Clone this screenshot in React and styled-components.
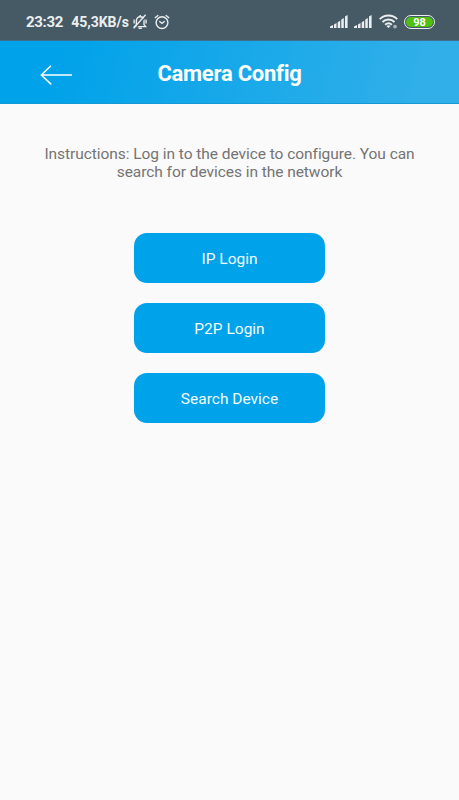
import React from 'react';
import styled, { createGlobalStyle } from 'styled-components';

const GlobalStyle = createGlobalStyle`
  * {
    box-sizing: border-box;
  }

  body {
    margin: 0;
    background: #fafafa;
    font-family: Roboto, 'Liberation Sans', sans-serif;
  }
`;

const Screen = styled.div`
  min-height: 100vh;
  display: flex;
  flex-direction: column;
  background: #fafafa;
`;

const StatusBar = styled.div`
  height: 41px;
  padding: 3px 24px 0 26px;
  display: flex;
  justify-content: space-between;
  align-items: center;
  background: #465a65;
  border-bottom: 1px solid #3f6f8c;
  color: #eceff1;
`;

const StatusGroup = styled.div`
  display: flex;
  align-items: center;
  gap: ${props => props.$gap};
`;

const StatusText = styled.span`
  font-size: ${props => props.$size};
  font-weight: 700;
  line-height: 18px;
  letter-spacing: ${props => props.$spacing || 'normal'};
  margin-right: ${props => props.$after || 0};
`;

const StatusIcon = styled.svg`
  display: block;
  flex: none;
`;

const Battery = styled.div`
  width: 31px;
  height: 14px;
  padding: 1px;
  border: 1px solid #eceff1;
  border-radius: 7px;
`;

const BatteryLevel = styled.div`
  height: 10px;
  border-radius: 5px;
  background: #4fc010;
  color: #fff;
  font-size: 11px;
  font-weight: 700;
  line-height: 11px;
  text-align: center;
`;

const Header = styled.header`
  height: 63px;
  padding: 0 40px;
  display: grid;
  grid-template-columns: 32px 1fr 32px;
  align-items: center;
  background: linear-gradient(105deg, #00a2e9 12%, #31afe9 92%);
  border-bottom: 1px solid #1599d6;
`;

const BackButton = styled.button`
  padding: 8px 0 0;
  border: none;
  background: none;
  cursor: pointer;
`;

const Title = styled.h1`
  margin: 4px 0 0;
  color: #fff;
  font-size: 22px;
  font-weight: 700;
  line-height: 26px;
  letter-spacing: -0.25px;
  text-align: center;
`;

const Content = styled.main`
  padding: 41px 40px 0;
  display: flex;
  flex-direction: column;
  align-items: center;
`;

const Instructions = styled.p`
  margin: 0;
  color: #747474;
  font-size: 15.5px;
  line-height: 18px;
  letter-spacing: -0.05px;
  text-align: center;
`;

const ButtonList = styled.div`
  margin-top: 52px;
  display: flex;
  flex-direction: column;
  gap: 20px;
`;

const Button = styled.button`
  width: 191px;
  height: 50px;
  padding: 1px 0 0;
  border: none;
  border-radius: 13px;
  background: #00a2e9;
  color: #f4fbff;
  font-family: inherit;
  font-size: 15.5px;
  cursor: pointer;
`;

function BellOffIcon() {
  return (
    <StatusIcon width="16" height="16" viewBox="0 0 16 16" fill="none" stroke="currentColor" strokeWidth="1.4">
      <path d="M2.6 12.600h11l-1.600-2V7c0-2.300-1.500-4.200-3.800-4.200S4.400 4.700 4.400 7v3.600z" />
      <path d="M8.200 1V3M6.600 14.200h3.200" />
      <path d="M2.200 5.400v4M14.100 5.400v4" strokeWidth="1.800" stroke="#c3cbcf" />
      <path d="M2.800 15.200 14.600 1.800" stroke="#465a65" strokeWidth="1.300" />
      <path d="M1.600 14.400 13.600 .8" />
    </StatusIcon>
  );
}

function AlarmIcon() {
  return (
    <StatusIcon width="16" height="16" viewBox="0 0 16 16" fill="none" stroke="currentColor" strokeWidth="1.4">
      <circle cx="8" cy="8.600" r="5.900" />
      <path d="M5.300 7.300 8 9.400l2.700-2.100" />
      <path d="M.8 4 4.300 1.200M15.200 4l-3.500-2.800" />
    </StatusIcon>
  );
}

function SignalIcon() {
  return (
    <StatusIcon width="18" height="13" viewBox="0 0 18 13" fill="currentColor">
      <path d="M0 13v-1.500L3 10v3zM4 13V9.500L6.500 8v5zM7.700 13V7.200L10.200 5.700V13zM11.300 13V4.600L13.800 3v10zM15 13V1.500L17.600 0v13z" />
    </StatusIcon>
  );
}

function WifiIcon() {
  return (
    <StatusIcon width="19" height="15" viewBox="0 0 19 15" fill="none" stroke="currentColor" strokeWidth="2">
      <path d="M.8 5.100c4.900-4.800 12.500-4.800 17.400 0" />
      <path d="M3.500 8c3.400-3.300 8.600-3.300 12 0" />
      <path d="M6.100 10.700c2-1.800 4.800-1.800 6.800 0" />
      <path d="m7.400 12.100 2.100 2 2.100-2c-1.200-1-3-1-4.200 0z" fill="currentColor" stroke="none" />
      <circle cx="16" cy="12.600" r="1.900" fill="#a9b2b7" stroke="none" />
    </StatusIcon>
  );
}

function ArrowIcon() {
  return (
    <svg width="32" height="20" viewBox="0 0 32 20" fill="none" stroke="#fff" strokeWidth="1.500">
      <path d="M11 .8 1.300 10l10 9.400M1.300 10H32" />
    </svg>
  );
}

const actions = ['IP Login', 'P2P Login', 'Search Device'];

function App() {
  return (
    <Screen>
      <GlobalStyle />
      <StatusBar>
        <StatusGroup $gap="0">
          <StatusText $size="15px" $spacing="-0.3px" $after="8px">23:32</StatusText>
          <StatusText $size="14px" $after="3px">45,3KB/s</StatusText>
          <StatusGroup $gap="6px">
            <BellOffIcon />
            <AlarmIcon />
          </StatusGroup>
        </StatusGroup>
        <StatusGroup $gap="6.500px">
          <SignalIcon />
          <SignalIcon />
          <WifiIcon />
          <Battery>
            <BatteryLevel>98</BatteryLevel>
          </Battery>
        </StatusGroup>
      </StatusBar>

      <Header>
        <BackButton aria-label="Back">
          <ArrowIcon />
        </BackButton>
        <Title>Camera Config</Title>
      </Header>

      <Content>
        <Instructions>
          Instructions: Log in to the device to configure. You can search for devices in the network
        </Instructions>
        <ButtonList>
          {actions.map(label => (
            <Button key={label}>{label}</Button>
          ))}
        </ButtonList>
      </Content>
    </Screen>
  );
}

export default App;
